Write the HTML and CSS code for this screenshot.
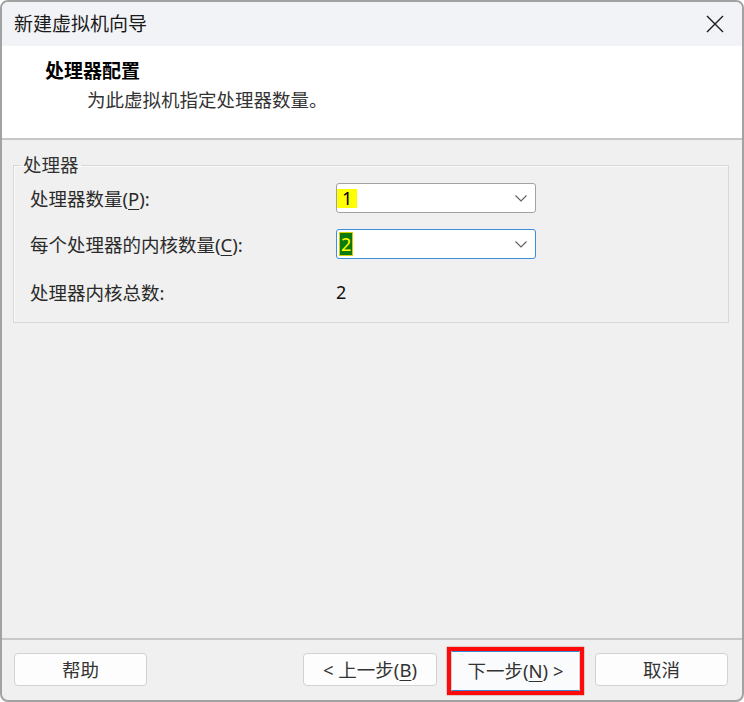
FILE: index.html
```html
<!DOCTYPE html>
<html lang="zh-CN">
<head>
<meta charset="utf-8">
<title>新建虚拟机向导</title>
<link rel="stylesheet" href="styles.css">
</head>
<body>
<div class="window">
  <div class="titlebar">
    <span class="title">新建虚拟机向导</span>
    <svg class="close" width="18" height="18" viewBox="0 0 18 18"><path d="M1 1 L17 17 M17 1 L1 17" stroke="#1c1c1c" stroke-width="1.4" fill="none"/></svg>
  </div>
  <div class="header">
    <div class="h-title">处理器配置</div>
    <div class="h-sub">为此虚拟机指定处理器数量。</div>
  </div>
  <div class="body">
    <fieldset class="group">
      <legend class="legend">处理器</legend>
      <div class="row">
        <span class="lbl">处理器数量(<u>P</u>):</span>
        <div class="combo">
          <span class="hl-yellow">1</span>
          <svg class="chev" width="12" height="7" viewBox="0 0 12 7"><polyline points="0.5,0.5 6,6 11.5,0.5" stroke="#606060" stroke-width="1.1" fill="none"/></svg>
        </div>
      </div>
      <div class="row row2">
        <span class="lbl">每个处理器的内核数量(<u>C</u>):</span>
        <div class="combo focused">
          <span class="hl-green">2</span>
          <svg class="chev" width="12" height="7" viewBox="0 0 12 7"><polyline points="0.5,0.5 6,6 11.5,0.5" stroke="#606060" stroke-width="1.1" fill="none"/></svg>
        </div>
      </div>
      <div class="row row3">
        <span class="lbl">处理器内核总数:</span>
        <span class="value">2</span>
      </div>
    </fieldset>
  </div>
  <div class="footer">
    <div class="btn btn-help">帮助</div>
    <div class="btn btn-back">&lt; 上一步(<u>B</u>)</div>
    <div class="mark">
      <div class="btn btn-next">下一步(<u>N</u>) &gt;</div>
    </div>
    <div class="btn btn-cancel">取消</div>
  </div>
</div>
</body>
</html>
```

FILE: styles.css
```css
html, body {
  margin: 0;
  padding: 0;
  background: #ffffff;
}

body {
  font-family: "Noto Sans", "Noto Sans CJK SC", sans-serif;
  color: #222222;
}

.window {
  width: 744px;
  height: 702px;
  box-sizing: border-box;
  border: 2px solid #a2a2a2;
  border-radius: 8px;
  overflow: hidden;
  display: flex;
  flex-direction: column;
  background: #f0f0f0;
}

.titlebar {
  height: 44px;
  flex: none;
  background: #f2f3f7;
  display: flex;
  align-items: center;
  justify-content: space-between;
  padding-left: 12px;
}

.title {
  font-size: 19px;
  line-height: 24px;
  color: #1a1a1a;
}

.close {
  margin-right: 18px;
  margin-top: -1px;
}

.header {
  height: 92px;
  flex: none;
  box-sizing: content-box;
  background: #ffffff;
  border-bottom: 2px solid #c6c6c6;
}

.h-title {
  padding-top: 13px;
  padding-left: 43px;
  font-size: 19px;
  line-height: 24px;
  font-weight: bold;
  color: #000000;
}

.h-sub {
  margin-top: 5px;
  padding-left: 85px;
  font-size: 18.5px;
  line-height: 24px;
  color: #333333;
}

.body {
  flex: 1;
  padding: 15px 13px 0 11px;
}

.group {
  margin: 0;
  padding: 8px 16px 15px 16px;
  border: 1px solid #d8d8d8;
  box-shadow: inset 1px 1px 0 #fafafa;
  min-width: 0;
}

.legend {
  padding: 0 2px;
  margin-left: -9px;
  font-size: 18.5px;
  line-height: 20px;
  color: #333333;
}

.row {
  display: flex;
  align-items: center;
  height: 30px;
}

.row2 {
  margin-top: 16px;
}

.row3 {
  margin-top: 18px;
}

.lbl {
  width: 306px;
  flex: none;
  font-size: 18.5px;
  color: #2a2a2a;
}

.lbl u,
.btn u {
  text-decoration-thickness: 1px;
  text-underline-offset: 3px;
}

.combo {
  width: 200px;
  height: 30px;
  box-sizing: border-box;
  border: 1px solid #a2a2a2;
  border-radius: 3px;
  background: #ffffff;
  display: flex;
  align-items: center;
  justify-content: space-between;
  padding-right: 8px;
}

.combo.focused {
  border-color: #3b8fdb;
}

.hl-yellow {
  background: #ffff00;
  color: #000000;
  font-size: 18px;
  line-height: 19px;
  height: 19px;
  padding: 0 5px;
}

.hl-green {
  margin-left: 3px;
  background: #0c7a0c;
  color: #ffff00;
  font-size: 18px;
  line-height: 22px;
  height: 22px;
  padding: 0 1px;
  outline: 1px solid #d8d000;
}

.value {
  font-size: 18px;
  color: #111111;
}

.footer {
  height: 60px;
  flex: none;
  box-sizing: content-box;
  border-top: 2px solid #c9c9c9;
  display: flex;
  align-items: flex-start;
  padding-left: 12px;
}

.btn {
  box-sizing: border-box;
  height: 33px;
  border: 1px solid #d2d2d2;
  border-radius: 4px;
  background: #fdfdfd;
  font-size: 18.5px;
  line-height: 31px;
  text-align: center;
  color: #333333;
}

.btn-help {
  width: 133px;
  margin-top: 13px;
}

.btn-back {
  width: 134px;
  margin-top: 13px;
  margin-left: 156px;
}

.mark {
  margin-left: 10px;
  margin-top: 7px;
  border: 4px solid #ff0a0a;
  padding: 0;
  box-shadow: 0 0 1px #8a0000;
}

.btn-next {
  width: 129px;
  height: 40px;
  line-height: 38px;
  border-radius: 1px;
  border-top-color: #3b86d0;
  border-bottom-color: #3b86d0;
  background: #fafbfc;
}

.btn-cancel {
  width: 133px;
  margin-top: 13px;
  margin-left: 11px;
}
```
